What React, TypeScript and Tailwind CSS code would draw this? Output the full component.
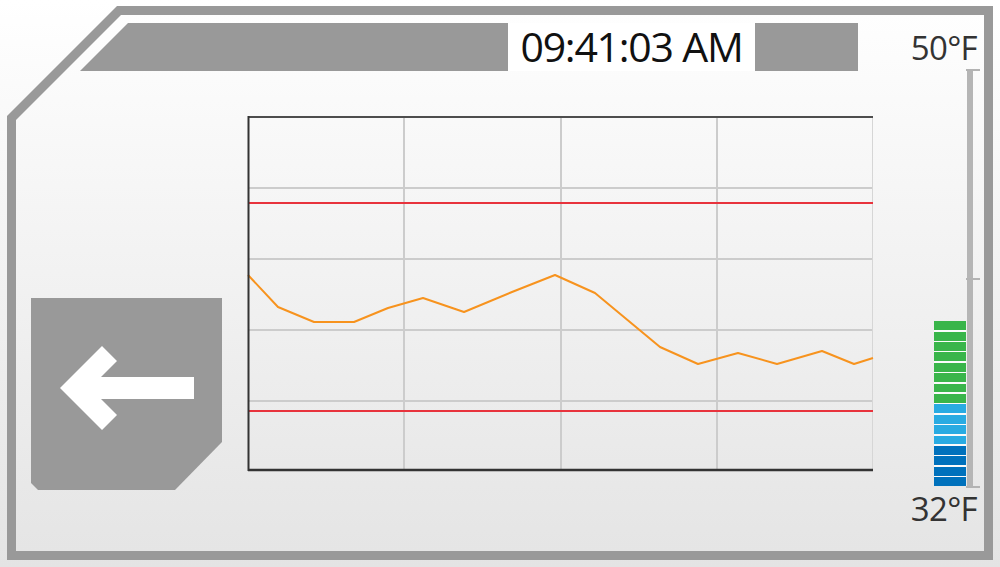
const trend: [number, number][] = [
  [0, 159], [30, 191], [66, 206], [106, 206], [140, 192], [175, 182],
  [216, 196], [264, 176], [307, 159], [347, 177], [412, 231], [450, 248],
  [490, 237], [529, 248], [574, 235], [606, 248], [625, 242],
];

const levels = [
  ...Array(8).fill("bg-[#39b54a]"),
  ...Array(4).fill("bg-[#29abe2]"),
  ...Array(4).fill("bg-[#0071bc]"),
];

function BackButton() {
  return (
    <button className="mt-[182px] flex h-[192px] w-[191px] shrink-0 bg-[#999] [clip-path:polygon(0_0,100%_0,100%_144px,144px_100%,7px_100%,0_185px)]">
      <svg width="191" height="192" viewBox="0 0 191 192">
        <polygon
          points="29,90 71,48 86,63 70,79 163,79 163,101 70,101 86,117 71,132"
          fill="#fff"
        />
      </svg>
    </button>
  );
}

function TrendChart() {
  const rows = [72, 143, 214, 285];
  const cols = [156, 313, 469];
  return (
    <div className="ml-[26px] h-[355px] w-[625px] shrink-0">
      <svg width="625" height="355" viewBox="0 0 625 355" className="overflow-visible">
        {rows.map((y) => (
          <line key={y} x1="0" x2="625" y1={y} y2={y} stroke="#cccccc" strokeWidth="2" />
        ))}
        {cols.map((x) => (
          <line key={x} x1={x} x2={x} y1="0" y2="355" stroke="#cccccc" strokeWidth="2" />
        ))}
        <line x1="624.5" x2="624.5" y1="0" y2="355" stroke="#d6d6d6" strokeWidth="1" />
        <line x1="0" x2="625" y1="87" y2="87" stroke="#e8333d" strokeWidth="2" />
        <line x1="0" x2="625" y1="295" y2="295" stroke="#e8333d" strokeWidth="2" />
        <polyline
          points={trend.map(([x, y]) => `${x},${y}`).join(" ")}
          fill="none"
          stroke="#f7931e"
          strokeWidth="2"
          strokeLinejoin="round"
        />
        <line x1="0" x2="625" y1="1" y2="1" stroke="#4d4d4d" strokeWidth="2" />
        <line x1="0" x2="625" y1="354" y2="354" stroke="#333" strokeWidth="2.5" />
        <line x1="0.5" x2="0.5" y1="0" y2="355" stroke="#333" strokeWidth="2" />
      </svg>
    </div>
  );
}

function Thermometer() {
  return (
    <div className="flex flex-col items-end pr-[4px] pt-[16px] text-[33px] leading-none tracking-[-0.02em] text-[#333]">
      <span className="mr-[3px]">50°F</span>
      <div className="mt-[5px] flex items-end">
        <div className="mb-[2px] flex w-[32px] flex-col gap-[1.5px] bg-white/80">
          {levels.map((c, i) => (
            <div key={i} className={`h-[8.9px] w-full ${c}`} />
          ))}
        </div>
        <div className="flex h-[419px] w-[14px] flex-col">
          <div className="h-[2px] w-[14px] bg-[#b3b3b3]" />
          <div className="ml-[1px] w-[6px] flex-1 bg-[#b5b5b5]" />
          <div className="h-[2px] w-[14px] bg-[#b3b3b3]" />
          <div className="ml-[1px] w-[6px] flex-1 bg-[#b5b5b5]" />
          <div className="h-[2px] w-[14px] bg-[#b3b3b3]" />
        </div>
      </div>
      <span className="mr-[3px] mt-[4px]">32°F</span>
    </div>
  );
}

export default function App() {
  return (
    <div className="h-[567px] w-[1000px] overflow-hidden bg-gradient-to-b from-white to-[#e4e4e4] pl-[7px] pt-[6px] font-['Open_Sans',sans-serif]">
      <div className="h-[554px] w-[986px] bg-[#999] p-[9px] [clip-path:polygon(110px_0,100%_0,100%_100%,0_100%,0_110px)]">
        <div className="flex h-full w-full bg-gradient-to-b from-[#fefefe] to-[#e5e5e5] [clip-path:polygon(105px_0,100%_0,100%_100%,0_100%,0_105px)]">
          <div className="flex w-[873px] flex-col">
            <div className="mt-[8px] flex h-[48px] pl-[64px]">
              <div className="w-[428px] bg-[#999] [clip-path:polygon(48px_0,100%_0,100%_100%,0_100%)]" />
              <div className="flex w-[247px] items-center justify-center bg-white text-[41px] tracking-[-0.03em] text-[#111]">
                09:41:03 AM
              </div>
              <div className="w-[103px] bg-[#999]" />
            </div>
            <div className="mt-[45px] flex items-start pl-[15px]">
              <BackButton />
              <TrendChart />
            </div>
          </div>
          <div className="flex flex-1 justify-end">
            <Thermometer />
          </div>
        </div>
      </div>
    </div>
  );
}
